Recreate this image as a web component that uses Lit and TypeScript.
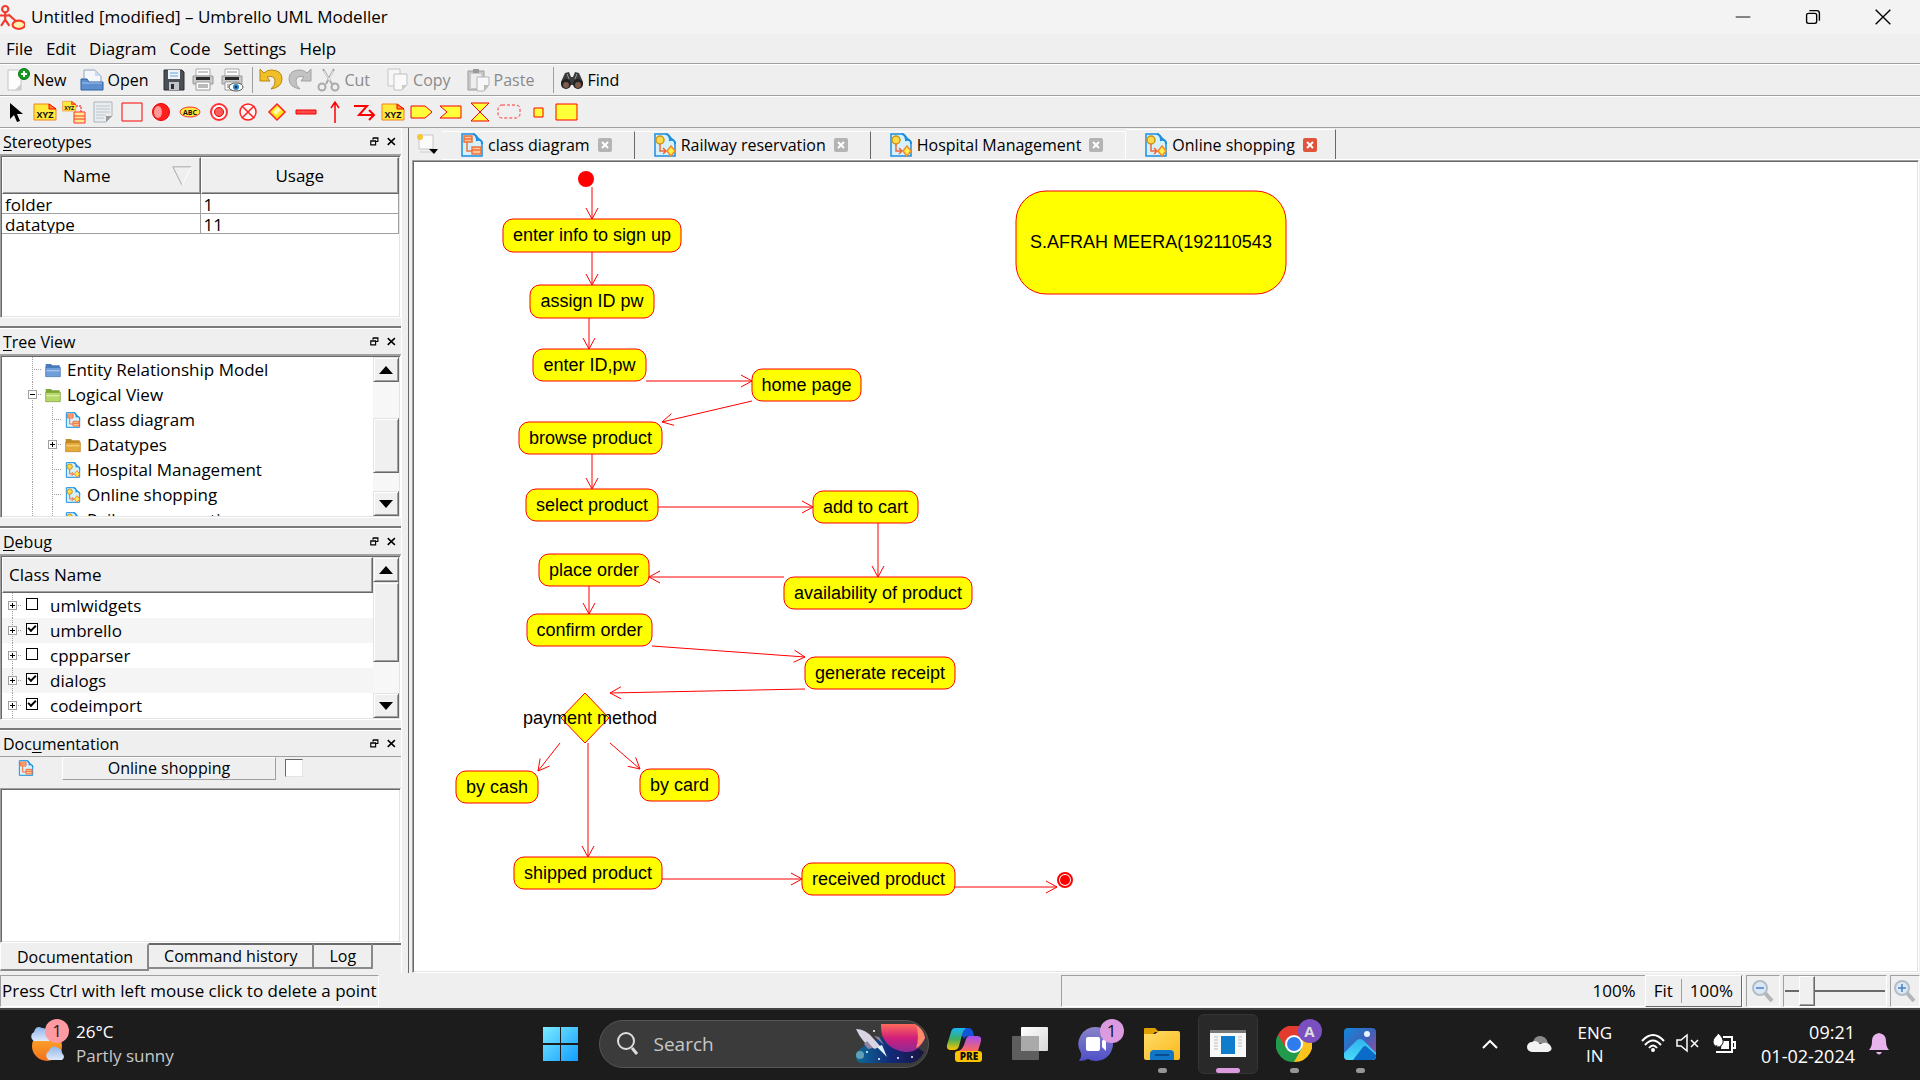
import { LitElement, html, svg, css, nothing } from "lit";
import { customElement, property, state } from "lit/decorators.js";
import { classMap } from "lit/directives/class-map.js";

/* ---------- icon drawings, all on a 24 x 24 grid ---------- */

const page = svg`<path d="M2 1h12l8 8v14H2z" fill="#d5f1fc" stroke="#1d8fe0" stroke-width="1.500"/><path d="M13 1q4 1 4 6 5-1 5 4" fill="#fff" stroke="#1d8fe0" stroke-width="2"/>`;

const xyz = (x: number, y: number, s: number) => svg`
  <g transform="translate(${x} ${y}) scale(${s})">
    <path d="M1 4h15l7 5v11H1z" fill="#ffe93b" stroke="#f58220"/>
    <path d="M16 4l7 5h-7z" fill="#ff8a3a" stroke="#f00"/>
    <text x="12" y="18" text-anchor="middle" font-family="Open Sans, sans-serif" font-weight="700" font-size="9" fill="#111">XYZ</text>
  </g>`;

const printer = svg`
  <path d="M5 1h14v7H5z" fill="#fff" stroke="#aaa"/><path d="M7 3h10v2H7z" fill="#c8c8c8"/>
  <path d="M2 8h20v8H2z" fill="#c9c9c9" stroke="#9a9a9a"/><path d="M5 9h14v3H5z" fill="#2b2b2b"/>
  <path d="M5 14h14v8H5z" fill="#fdfdfd" stroke="#999"/><path d="M7 17h10M7 19h10" stroke="#777"/>`;

const ICONS: Record<string, unknown> = {
  app: svg`<g fill="none" stroke="#f33a2c" stroke-width="2"><circle cx="5" cy="4" r="3"/><path d="M5 7v7M0 10h9M5 14l-4 6M5 14l4 6M8 9l8 7"/><ellipse cx="18" cy="19" rx="6" ry="4" fill="#fff3b0"/></g>`,
  new: svg`<path d="M2 2h13v20H2z" fill="#fdfdfd" stroke="#c4c4c4"/><path d="M15 16l-6 6h6z" fill="#ccc"/><circle cx="18" cy="6" r="5.500" fill="#139a1d" stroke="#0c7a14"/><path d="M18 3v6M15 6h6" stroke="#fff" stroke-width="2"/>`,
  open: svg`<path d="M4 2h11l6 6v10H4z" fill="#f4f8fd" stroke="#8fa3bd"/><path d="M15 2v6h6z" fill="#c9d8ea"/><path d="M1 11h6l2 3h14v8H1z" fill="#5d8fd0" stroke="#2f5f9f"/><path d="M2 15h20" stroke="#a9c6ec"/>`,
  save: svg`<path d="M2 2h18l2 2v18H2z" fill="#4b4f57" stroke="#2b2d31"/><path d="M6 2h12v9H6z" fill="#eef3f8"/><path d="M8 5h8M8 8h8" stroke="#6da4d8"/><path d="M7 14h10v8H7z" fill="#c2c4c8"/><path d="M9 16h3v5H9z" fill="#2b2d31"/>`,
  print: printer,
  preview: svg`${printer}<ellipse cx="16" cy="19" rx="7" ry="4" fill="#fff" stroke="#555"/><circle cx="16" cy="19" r="3" fill="#2a7fc4"/><circle cx="16" cy="19" r="1" fill="#123"/>`,
  undo: svg`<path d="M1 1v12h10L8 9q7-2 8 3 1 5-4 9 11-2 11-10 0-9-11-9-4 0-7 3z" fill="#f1bf2a" stroke="#b8870b"/>`,
  redo: svg`<path d="M23 1v12H13l3-4q-7-2-8 3-1 5 4 9-11-2-11-10 0-9 11-9 4 0 7 3z" fill="#c3c3c3" stroke="#a2a2a2"/>`,
  cut: svg`<g fill="none" stroke="#a9a9a9" stroke-width="2"><path d="M6 1l9 15M17 1L9 16"/><circle cx="5" cy="19" r="3.500"/><circle cx="18" cy="19" r="3.500"/></g><path d="M7 3l6 10M16 3l-4 9" stroke="#eee"/>`,
  copy: svg`<path d="M2 1h12v17H2z" fill="#f6f6f6" stroke="#c6c6c6"/><path d="M8 6h13v11l-5 5H8z" fill="#f9f9f9" stroke="#c2c2c2"/><path d="M21 17l-5 5v-5z" fill="#ccc"/>`,
  paste: svg`<path d="M1 3h16v19H1z" fill="#c9c9c9" stroke="#9c9c9c"/><path d="M4 6h10v14H4z" fill="#eee"/><path d="M6 1h6v4H6z" fill="#999"/><path d="M10 9h12v8l-5 6h-7z" fill="#f7f7f7" stroke="#b5b5b5"/><path d="M22 17l-5 6v-6z" fill="#bbb"/>`,
  find: svg`<path d="M5 5l4-1 2 5h2l2-5 4 1 4 9v3H1v-3z" fill="#3b3b3b"/><circle cx="6" cy="16" r="5" fill="#222"/><circle cx="18" cy="16" r="5" fill="#222"/><circle cx="6" cy="17" r="3" fill="#7d5c4c"/><circle cx="18" cy="17" r="3" fill="#7d5c4c"/><path d="M7 6l2 5M17 6l-2 5" stroke="#999"/>`,
  arrow: svg`<path d="M6 3v16l4-4 3 7 3-1-3-7h6z" fill="#000"/>`,
  xyz: xyz(0, 0, 1),
  dependency: svg`${xyz(0, -1, 0.6)}<path d="M14 6h5v6" fill="none" stroke="#f00" stroke-dasharray="2 1"/><path d="M12 12h11v11H12z" fill="#ffe98a" stroke="#f33"/><path d="M12 16h11M12 19h11" stroke="#f33"/>`,
  note: svg`<path d="M3 2h18v14l-6 6H3z" fill="#e9edf0" stroke="#adb4ba"/><path d="M5 6h14M5 9h14M5 12h14M5 15h10M5 18h8" stroke="#bcc5cc"/><path d="M21 16l-6 6v-6z" fill="#999"/>`,
  box: svg`<path d="M2 3h20v18H2z" fill="none" stroke="#f00"/>`,
  ball: svg`<circle cx="12" cy="12" r="8.500" fill="#ff1f1f" stroke="#e00"/><ellipse cx="9" cy="12" rx="4" ry="6" fill="#ff9a9a"/>`,
  abc: svg`<ellipse cx="12" cy="12" rx="10" ry="5" fill="#ffe93b" stroke="#f33"/><text x="12" y="15" text-anchor="middle" font-family="Open Sans, sans-serif" font-weight="700" font-size="7" fill="#111">ABC</text>`,
  target: svg`<circle cx="12" cy="12" r="8" fill="#fff" stroke="#f33" stroke-width="2"/><circle cx="12" cy="12" r="4.500" fill="#ff5c5c" stroke="#e00"/>`,
  cross: svg`<circle cx="12" cy="12" r="8" fill="#fff5f5" stroke="#f22" stroke-width="1.500"/><path d="M6 6l12 12M18 6L6 18" stroke="#f22" stroke-width="1.500"/>`,
  diamond: svg`<path d="M12 4l8 8-8 8-8-8z" fill="#ffe61a" stroke="#f22" stroke-width="1.500"/><path d="M8 12l5-5 3 3-5 5z" fill="#fff9b8"/>`,
  dash: svg`<path d="M2 10h20v4H2z" fill="#ff4a4a" stroke="#e00"/>`,
  up: svg`<path d="M12 23V2M8 8l4-6 4 6" fill="none" stroke="#f00" stroke-width="1.500"/>`,
  zigzag: svg`<path d="M2 6h13L7 15h15M17 10l5 5-5 5" fill="none" stroke="#f00" stroke-width="2"/>`,
  signal: svg`<path d="M1 6h14l7 6-7 6H1z" fill="#ffff3a" stroke="#f00"/>`,
  receive: svg`<path d="M1 6h21v12H1l7-6z" fill="#ffff3a" stroke="#f00"/>`,
  hourglass: svg`<path d="M3 3h18L3 21h18z" fill="#ffff3a" stroke="#f00"/>`,
  region: svg`<rect x="1" y="5" width="22" height="13" rx="4" fill="none" stroke="#f33" stroke-dasharray="3 2"/>`,
  pin: svg`<path d="M8 8h9v9H8z" fill="#ffff3a" stroke="#f00"/>`,
  object: svg`<path d="M1 4h21v16H1z" fill="#ffff3a" stroke="#f00"/>`,
  newtab: svg`<path d="M4 3h14v14H4z" fill="#fbfbfb" stroke="#c6c6c6"/><circle cx="5" cy="5" r="3" fill="#f6c736"/><path d="M5 20h12" stroke="#d0d0d0"/><path d="M14 17h9l-4 5z" fill="#000"/>`,
  classdiag: svg`${page}<path d="M4 3h8v6H4zM12 14h9v7h-9z" fill="#ffc49a" stroke="#f0703c" stroke-width="1.500"/><path d="M7 9v9h5M4 6h8M12 17h9" fill="none" stroke="#f0703c" stroke-width="1.500"/>`,
  activity: svg`${page}<circle cx="7" cy="7" r="4" fill="#ffd94a" stroke="#c9951a" stroke-width="1.500"/><path d="M7 11v7h5M10 15l3 3-3 3" fill="none" stroke="#f0653a" stroke-width="1.500"/><path d="M18 13l4 5-4 5-4-5z" fill="#fff04a" stroke="#f58a28" stroke-width="1.500"/>`,
  folderBlue: svg`<path d="M1 3h8l2 2h11v4H1z" fill="#4a7bbd"/><path d="M1 8h22v14H1z" fill="#6f9fdb" stroke="#3c6aa8"/><path d="M2 13h20" stroke="#a4c4ee" stroke-width="2"/>`,
  folderGreen: svg`<path d="M1 3h8l2 2h11v4H1z" fill="#7fa83a"/><path d="M1 8h22v14H1z" fill="#b6d96a" stroke="#6e9a2c"/><path d="M2 13h20" stroke="#d9f0a4" stroke-width="2"/>`,
  folderGold: svg`<path d="M1 3h8l2 2h11v4H1z" fill="#c08a28"/><path d="M1 8h22v14H1z" fill="#e5aa3a" stroke="#b07a18"/><path d="M2 13h20" stroke="#f5cf7e" stroke-width="2"/>`,
  zoomOut: svg`<path d="M14 14l7 8" stroke="#b5b5b5" stroke-width="4"/><circle cx="9" cy="9" r="7" fill="#d8e8f8" stroke="#b4bcc6" stroke-width="2"/><path d="M5 9h8" stroke="#4d7fc0" stroke-width="1.500"/>`,
  zoomIn: svg`<path d="M14 14l7 8" stroke="#b5b5b5" stroke-width="4"/><circle cx="9" cy="9" r="7" fill="#d8e8f8" stroke="#b4bcc6" stroke-width="2"/><path d="M5 9h8M9 5v8" stroke="#4d7fc0" stroke-width="1.500"/>`,
  float: svg`<path d="M8 2h13v10h-5M8 2v5M8 3h13" fill="none" stroke="#000" stroke-width="3"/><path d="M2 10h13v11H2zM2 11h13" fill="none" stroke="#000" stroke-width="3"/>`,
  close: svg`<path d="M2 3l19 18M21 3L2 21" stroke="#000" stroke-width="4"/>`,
  minimize: svg`<path d="M4 12h16" stroke="#000"/>`,
  restore: svg`<rect x="5" y="8" width="11" height="11" rx="2" fill="none" stroke="#000" stroke-width="1.500"/><path d="M8 5h8q3 0 3 3v8" fill="none" stroke="#000" stroke-width="1.500"/>`,
  quit: svg`<path d="M4 4l16 16M20 4L4 20" stroke="#000" stroke-width="1.500"/>`,
  tabclose: svg`<path d="M6 6l12 12M18 6L6 18" stroke="#fff" stroke-width="4"/>`,
  sort: svg`<path d="M2 2h20" stroke="#a0a0a0"/><path d="M2 2l10 20" stroke="#a0a0a0"/><path d="M22 2L12 22" stroke="#fff"/>`,
};

const icon = (name: string, size = 24) =>
  svg`<svg class="icon" width=${size} height=${size} viewBox="0 0 24 24" aria-hidden="true">${ICONS[name]}</svg>`;

/* ---------- dock panel ---------- */

@customElement("dock-panel")
export class DockPanel extends LitElement {
  @property() before = "";
  @property() key = "";
  @property() after = "";

  static styles = css`
    :host { display: flex; flex-direction: column; min-height: 0; border-top: 2px solid #7a7a7a; }
    :host([first]) { border-top: 0; }
    .title { display: flex; align-items: center; height: 25px; flex: none; padding: 0 1px 0 3px; border-top: 1px solid #fff; border-bottom: 1px solid #a0a0a0; }
    h2 { flex: 1; margin: 0; font-size: 16px; font-weight: 400; line-height: 24px; }
    button { display: grid; place-items: center; width: 17px; height: 17px; padding: 0; border: 0; background: none; }
    u { text-underline-offset: 2px; }
  `;

  render() {
    return html`
      <div class="title">
        <h2>${this.before}<u>${this.key}</u>${this.after}</h2>
        <button aria-label="Float panel">${icon("float", 9)}</button>
        <button aria-label="Close panel">${icon("close", 9)}</button>
      </div>
      <slot></slot>
    `;
  }
}

/* ---------- classic scroll bar ---------- */

@customElement("scroll-strip")
export class ScrollStrip extends LitElement {
  @property({ type: Number }) lead = 0;
  @property({ type: Number }) thumb = 1;
  @property({ type: Number }) trail = 0;

  static styles = css`
    :host { display: flex; flex-direction: column; width: 26px; flex: none; background: #f7f7f7; }
    button, .thumb { box-sizing: border-box; background: #f0f0f0; border: 1px solid; border-color: #e3e3e3 #696969 #696969 #e3e3e3; box-shadow: inset 1px 1px #fff, inset -1px -1px #a0a0a0; }
    button { display: grid; place-items: center; height: 25px; width: 26px; flex: none; padding: 0; }
  `;

  render() {
    return html`
      <button aria-label="Scroll up"><svg width="14" height="8" viewBox="0 0 14 8"><path d="M7 0l7 8H0z" /></svg></button>
      <div style="flex:${this.lead}"></div>
      <div class="thumb" style="flex:${this.thumb}"></div>
      <div style="flex:${this.trail}"></div>
      <button aria-label="Scroll down"><svg width="14" height="8" viewBox="0 0 14 8"><path d="M0 0h14L7 8z" /></svg></button>
    `;
  }
}

/* ---------- activity diagram ---------- */

type Box = [x: number, y: number, w: number, h: number, label: string];
type Edge = [x1: number, y1: number, x2: number, y2: number];

const BOXES: Box[] = [
  [89, 57, 178, 33, "enter info to sign up"],
  [116, 123, 124, 33, "assign ID pw"],
  [119, 187, 113, 32, "enter ID,pw"],
  [338, 207, 109, 32, "home page"],
  [105, 260, 143, 32, "browse product"],
  [112, 327, 132, 32, "select product"],
  [399, 329, 105, 32, "add to cart"],
  [370, 415, 188, 32, "availability of product"],
  [125, 392, 110, 32, "place order"],
  [113, 452, 125, 32, "confirm order"],
  [391, 495, 150, 32, "generate receipt"],
  [42, 609, 82, 32, "by cash"],
  [226, 607, 79, 32, "by card"],
  [100, 695, 148, 32, "shipped product"],
  [388, 701, 153, 32, "received product"],
  [602, 29, 270, 103, "S.AFRAH MEERA(192110543"],
];

const EDGES: Edge[] = [
  [178, 25, 178, 57], [178, 90, 178, 123], [175, 156, 175, 187], [232, 219, 338, 219],
  [338, 239, 248, 260], [178, 292, 178, 327], [244, 345, 399, 345], [464, 361, 464, 415],
  [370, 415, 235, 415], [175, 424, 175, 452], [238, 484, 391, 495], [391, 527, 196, 531],
  [146, 581, 124, 609], [174, 581, 174, 695], [196, 581, 226, 607], [248, 717, 388, 717],
  [541, 725, 643, 725],
];

@customElement("activity-canvas")
export class ActivityCanvas extends LitElement {
  static styles = css`
    :host { display: block; flex: 1; min-height: 0; overflow: hidden; background: #fff; }
    svg { display: block; width: 100%; height: 100%; }
    rect, .decision { fill: #ff0; stroke: #f00; }
    .edge { fill: none; stroke: #f00; }
    .solid { fill: #f00; }
    .ring { fill: #fff; stroke: #f00; stroke-width: 2; }
    text { font: 18px "Liberation Sans", Arial, sans-serif; text-anchor: middle; fill: #000; }
  `;

  private edge([x1, y1, x2, y2]: Edge) {
    const a = Math.atan2(y2 - y1, x2 - x1);
    const wing = (side: number) => {
      const x = x2 - 11 * Math.cos(a) - side * 6 * Math.sin(a);
      const y = y2 - 11 * Math.sin(a) + side * 6 * Math.cos(a);
      return `${x.toFixed(1)} ${y.toFixed(1)}`;
    };
    return svg`<path class="edge" d="M${x1} ${y1}L${x2} ${y2}M${wing(1)}L${x2} ${y2}L${wing(-1)}"/>`;
  }

  render() {
    return html`<svg role="img" aria-label="Online shopping activity diagram">
      <circle class="solid" cx="172" cy="17" r="8" />
      ${BOXES.map(([x, y, w, h, label]) => svg`
        <rect x=${x} y=${y} width=${w} height=${h} rx=${h > 40 ? 30 : 10}/>
        <text x=${x + w / 2} y=${y + Math.floor(h / 2) + 6}>${label}</text>`)}
      ${EDGES.map((e) => this.edge(e))}
      <path class="decision" d="M171 531l24 25-24 25-24-25z" />
      <text x="176" y="562">payment method</text>
      <circle class="ring" cx="651" cy="718" r="7" />
      <circle class="solid" cx="651" cy="718" r="5" />
    </svg>`;
  }
}

/* ---------- desktop taskbar ---------- */

const TASKS: { name: string; running?: boolean; active?: boolean; badge?: string; badgeClass?: string; art: unknown }[] = [
  {
    name: "Copilot",
    art: svg`<defs><linearGradient id="ca" x2="0" y2="1"><stop stop-color="#16b5f5"/><stop offset=".5" stop-color="#3fae62"/><stop offset="1" stop-color="#ffc400"/></linearGradient><linearGradient id="cb" x2="0" y2="1"><stop stop-color="#a34df0"/><stop offset="1" stop-color="#ff6a5a"/></linearGradient></defs>
      <path d="M12 2h10q4 0 5 4l1 4h-5q-4 0-5 3z" fill="#1455d8"/>
      <path d="M9 2h11q-3 2-4 7l-3 11q-1 4-5 4H5q-5 0-4-5L5 6q1-4 4-4z" fill="url(#ca)"/>
      <path d="M23 10h8q5 0 4 5l-3 10H12q4-1 6-6l2-6q1-3 3-3z" fill="url(#cb)"/>
      <rect x="9" y="25" width="27" height="11" rx="3" fill="#ffc400"/>
      <text x="23" y="34" text-anchor="middle" font-family="Open Sans, sans-serif" font-weight="800" font-size="10" fill="#111">PRE</text>`,
  },
  {
    name: "Task view",
    art: svg`<defs><linearGradient id="tv" x2="1" y2="1"><stop stop-color="#fff"/><stop offset="1" stop-color="#d8d8d8"/></linearGradient></defs><rect x="9" y="1" width="27" height="24" rx="1" fill="url(#tv)"/><rect x="0" y="10" width="27" height="24" rx="1" fill="#6a6a6a" opacity=".85"/><path d="M9 10h18v15H9z" fill="#aaa"/>`,
  },
  {
    name: "Chat", badge: "1", badgeClass: "pink",
    art: svg`<defs><linearGradient id="ch" x2="0" y2="1"><stop stop-color="#8a84c8"/><stop offset="1" stop-color="#4f50c8"/></linearGradient></defs><path d="M18 1a17 17 0 1 1-8 32q-4 2-9 2 3-5 2-8A17 17 0 0 1 18 1z" fill="url(#ch)"/><rect x="8" y="11" width="14" height="14" rx="2" fill="#fff"/><path d="M24 15l4-4v14l-4-4z" fill="#fff"/>`,
  },
  {
    name: "File Explorer", running: true,
    art: svg`<defs><linearGradient id="fe" x2="1" y2="1"><stop stop-color="#ffdc6a"/><stop offset="1" stop-color="#fbb91a"/></linearGradient></defs><path d="M0 3q0-1 1-1h10l4 4h-4l-3 3H0z" fill="#e0a000"/><path d="M0 8h11l4-3h19q2 0 2 2v25q0 2-2 2H2q-2 0-2-2z" fill="url(#fe)"/><path d="M6 34v-6q0-4 4-4h16q4 0 4 4v6z" fill="#0f76c8"/><path d="M11 29h14" stroke="#0a4d8c" stroke-width="2"/>`,
  },
  {
    name: "Umbrello", running: true, active: true,
    art: svg`<path d="M0 4h36v27H0z" fill="#f8f8f8"/><path d="M0 4h36v3H0z" fill="#777"/><path d="M11 10h14v18H11z" fill="#0f7ccc"/><path d="M4 11h4M4 14h4M4 17h4M4 20h4M4 23h4M28 11h4M28 14h4M28 17h4M28 20h4" stroke="#bbb"/>`,
  },
  {
    name: "Chrome", running: true, badge: "A", badgeClass: "violet",
    art: svg`<path d="M18 18L2 9a18 18 0 0 1 32 0z" fill="#e33b2e"/><path d="M18 18l16-9a18 18 0 0 1-16 27z" fill="#fcc31e"/><path d="M18 18v18A18 18 0 0 1 2 9z" fill="#229a4b"/><path d="M10 22L2 9h16z" fill="#e33b2e"/><path d="M26 22l-8 14-6-10z" fill="#229a4b"/><circle cx="18" cy="18" r="9" fill="#fff"/><circle cx="18" cy="18" r="7" fill="#2f7cf0"/>`,
  },
  {
    name: "Photos", running: true,
    art: svg`<defs><linearGradient id="ph" x2="1" y2="1"><stop stop-color="#1288dc"/><stop offset=".5" stop-color="#3e62b8"/><stop offset="1" stop-color="#a8489a"/></linearGradient><linearGradient id="pm" x2="0" y2="1"><stop stop-color="#2fb4ee"/><stop offset="1" stop-color="#4ad8fa"/></linearGradient></defs><rect x="2" y="2" width="32" height="32" rx="4" fill="url(#ph)"/><path d="M2 27l13-13q3-2 6 0l13 13v3q0 4-4 4H6q-4 0-4-4z" fill="url(#pm)"/><path d="M11 34l10-13q2-2 4 0l9 8v1q0 4-4 4z" fill="#0a6cc8"/><circle cx="25" cy="8" r="3" fill="#e8f4ff"/>`,
  },
];

@customElement("task-bar")
export class TaskBar extends LitElement {
  static styles = css`
    :host { display: grid; grid-template-columns: 1fr auto 1fr; align-items: center; height: 72px; box-sizing: border-box; padding-bottom: 2px; background: #1c1c1c; border-top: 2px solid #444; color: #fff; font: 17px/24px "Open Sans", "Noto Sans", sans-serif; }
    button { padding: 0; border: 0; background: none; color: inherit; font: inherit; }
    .weather { display: flex; gap: 7px; justify-self: start; align-items: center; padding-left: 29px; text-align: left; }
    .weather small, .clock small { display: block; font-size: inherit; }
    .weather small { color: #c8c8c8; }
    .weather svg { margin-bottom: 8px; }
    .middle { display: flex; align-items: center; }
    .task { position: relative; display: grid; place-items: center; width: 66px; height: 60px; }
    .task.active::before { content: ""; position: absolute; inset: 0 3px; border-radius: 6px; background: #292929; border: 1px solid #353535; }
    .task svg { position: relative; display: block; }
    .task.running::after { content: ""; position: absolute; bottom: 1px; left: 29px; width: 9px; height: 5px; border-radius: 3px; background: #969696; }
    .task.active::after { left: 21px; width: 24px; background: #dc9be0; }
    .badge { position: absolute; top: 5px; right: 5px; width: 24px; height: 24px; border-radius: 12px; text-align: center; line-height: 24px; }
    .pink { background: #dc9be0; color: #111; }
    .violet { background: #7a4fc0; color: #ddd; font-size: 15px; font-weight: 700; }
    .search { display: flex; align-items: center; gap: 14px; box-sizing: border-box; width: 330px; height: 48px; margin: 0 2px 0 5px; padding-left: 16px; border: 1px solid #555; border-radius: 24px; background: #3b3b3b; overflow: hidden; }
    .search input { flex: 1; min-width: 0; padding: 0; border: 0; outline: 0; background: none; color: #fff; font: 19px "Open Sans", sans-serif; }
    .search input::placeholder { color: #c8c8c8; opacity: 1; }
    .tray { display: flex; align-items: center; justify-self: end; padding-right: 30px; }
    .tray svg { display: block; }
    .cloud { margin-left: 28px; }
    .lang { margin: 0 29px 0 25px; text-align: center; line-height: 23px; }
    .status { display: flex; gap: 11px; }
    .clock { margin: 0 13px 0 24px; text-align: right; font-size: 18px; }
  `;

  render() {
    return html`
      <button class="weather">
        <svg width="40" height="44" viewBox="0 0 40 44">
          <defs><linearGradient id="sun" x2="0" y2="1"><stop stop-color="#ffb52e" /><stop offset="1" stop-color="#f2701c" /></linearGradient>
          <linearGradient id="cl" x2="0" y2="1"><stop stop-color="#8fb4ea" /><stop offset="1" stop-color="#dfe9fa" /></linearGradient></defs>
          <circle cx="18" cy="28" r="15" fill="url(#sun)" />
          <path d="M5 23a5 5 0 0 1 0-9q2-7 8-4 5 0 6 5 4 3 1 8z" fill="url(#cl)" />
          <path d="M20 42a5 5 0 0 1 0-9q3-7 9-3 4 1 4 5 4 4 0 7z" fill="url(#cl)" />
          <circle cx="28" cy="13" r="12" fill="#ff9aa2" />
          <text x="28" y="19" text-anchor="middle" font-family="Open Sans, sans-serif" font-size="17" fill="#222">1</text>
        </svg>
        <span>26°C<small>Partly sunny</small></span>
      </button>
      <div class="middle">
        <button class="task" aria-label="Start">
          <svg width="36" height="36" viewBox="0 0 36 36"><defs><linearGradient id="w" gradientUnits="userSpaceOnUse" x1="0" y1="0" x2="36" y2="36"><stop stop-color="#7cecff" /><stop offset="1" stop-color="#0f9bff" /></linearGradient></defs><path d="M0 1h17v16H0zM18 1h17v16H18zM0 19h17v16H0zM18 19h17v16H18z" fill="url(#w)" /></svg>
        </button>
        <div class="search">
          <svg width="24" height="26" viewBox="0 0 24 26"><circle cx="10" cy="10" r="8" fill="none" stroke="#ddd" stroke-width="2" /><path d="M16 17l5 6" stroke="#ddd" stroke-width="3" /></svg>
          <input aria-label="Search" placeholder="Search" />
          <svg width="74" height="40" viewBox="0 0 74 40">
            <defs><linearGradient id="sky" x2="1"><stop stop-color="#0d6c98" /><stop offset=".5" stop-color="#122a7a" /><stop offset="1" stop-color="#1a1440" /></linearGradient>
            <linearGradient id="pl" x2="0" y2="1"><stop stop-color="#ff6a5a" /><stop offset=".5" stop-color="#d01f7a" /><stop offset="1" stop-color="#8a2a9a" /></linearGradient></defs>
            <path d="M2 32q0-6 12-12L40 8l30 20q-6 11-14 11H8q-6 0-6-7z" fill="url(#sky)" />
            <path d="M27 0h34q8 4 10 14-6 15-20 14Q26 24 27 0z" fill="url(#pl)" /><path d="M62 1q8 5 9 13-4 8-9 10 4-10 0-23z" fill="#ff8a6a" />
            <path d="M2 5q9 0 16 8l8 9-5 3Q9 21 2 5z" fill="#d9d3e2" /><path d="M10 20l3-3 6 7-5 1zM20 12l5 1 5 8z" fill="#8b86a2" /><path d="M23 23l5-2 5 12z" fill="#dff4ff" />
            <circle cx="6" cy="31" r="4" fill="#5f9fb8" /><g fill="#fff"><circle cx="25" cy="35" r="1" /><circle cx="44" cy="34" r="1" /><circle cx="58" cy="33" r="1" /><circle cx="13" cy="28" r="1" /><circle cx="20" cy="7" r="1" /></g>
          </svg>
        </div>
        ${TASKS.map((t) => html`
          <button class=${classMap({ task: true, running: !!t.running, active: !!t.active })} aria-label=${t.name}>
            <svg width="36" height="36" viewBox="0 0 36 36">${t.art}</svg>
            ${t.badge ? html`<span class="badge ${t.badgeClass}">${t.badge}</span>` : nothing}
          </button>`)}
      </div>
      <div class="tray">
        <button aria-label="Hidden icons"><svg width="18" height="12" viewBox="0 0 18 12"><path d="M2 10l7-7 7 7" fill="none" stroke="#fff" stroke-width="2" /></svg></button>
        <svg class="cloud" width="25" height="18" viewBox="0 0 25 18"><path d="M6 8q1-7 7-7t8 7z" fill="#8a8a8a" /><path d="M5 17a5 5 0 0 1 0-10q4-3 8 2 7-3 10 1 4 5-2 7z" fill="#f2f2f2" /></svg>
        <button class="lang">ENG<br />IN</button>
        <div class="status">
          <svg width="24" height="20" viewBox="0 0 24 20"><g fill="none" stroke="#fff" stroke-width="2"><path d="M1 8q11-12 22 0M4 12q8-9 16 0M8 15q4-5 8 0" /></g><circle cx="12" cy="17" r="2" fill="#fff" /></svg>
          <svg width="24" height="20" viewBox="0 0 24 20"><path d="M1 7h4l6-5v16l-6-5H1zM15 7l7 7M22 7l-7 7" fill="none" stroke="#fff" stroke-width="1.500" /></svg>
          <svg width="26" height="22" viewBox="0 0 26 22"><path d="M12 4h9v15H5M22 9h2v6h-2" fill="none" stroke="#fff" stroke-width="2" /><path d="M11 8h7v8h-8z" fill="#fff" /><path d="M7 0q6 5 5 10-3 6-8 3-4-4 0-9 2-1 3-4zM6 12l-3 7" fill="#fff" stroke="#1c1c1c" /></svg>
        </div>
        <button class="clock">09:21<small>01-02-2024</small></button>
        <button aria-label="Notifications"><svg width="22" height="24" viewBox="0 0 22 24"><path d="M1 18q3-3 3-9 0-7 7-8 7 1 7 8 0 6 3 9z" fill="#e9b3ee" /><path d="M8 20h6q-3 5-6 0z" fill="#e9b3ee" /></svg></button>
      </div>
    `;
  }
}

/* ---------- main window ---------- */

interface TreeItem { label: string; icon: string; level: 1 | 2; box?: "plus" | "minus" }

const TREE: TreeItem[] = [
  { label: "Entity Relationship Model", icon: "folderBlue", level: 1 },
  { label: "Logical View", icon: "folderGreen", level: 1, box: "minus" },
  { label: "class diagram", icon: "classdiag", level: 2 },
  { label: "Datatypes", icon: "folderGold", level: 2, box: "plus" },
  { label: "Hospital Management", icon: "activity", level: 2 },
  { label: "Online shopping", icon: "activity", level: 2 },
  { label: "Railway reservation", icon: "activity", level: 2 },
];

const TOOLS = ["arrow", "xyz", "dependency", "note", "box", "ball", "abc", "target", "cross", "diamond", "dash", "up", "zigzag", "xyz", "signal", "receive", "hourglass", "region", "pin", "object"];

const expander = (x: number, kind: string) => svg`
  <rect x=${x - 4} y="8" width="8" height="8" fill="#fff" stroke="#a0a0a0"/>
  <path d="M${x - 2} 12h5${kind === "plus" ? `M${x} 10v5` : ""}" stroke="#000"/>`;

@customElement("app-root")
export class AppRoot extends LitElement {
  @state() private tab = 3;
  private tabs = ["class diagram", "Railway reservation", "Hospital Management", "Online shopping"];
  private modules: [string, boolean][] = [["umlwidgets", false], ["umbrello", true], ["cppparser", false], ["dialogs", true], ["codeimport", true]];

  static styles = css`
    :host { display: flex; flex-direction: column; height: 100vh; overflow: hidden; background: #efefef; color: #000; font: 16px/24px "Open Sans", "Noto Sans", sans-serif; }
    button { padding: 0; border: 0; background: none; color: inherit; font: inherit; }
    .icon { display: block; flex: none; }

    .titlebar { display: flex; align-items: center; gap: 6px; height: 34px; flex: none; background: #f3f3f3; font-size: 17px; }
    h1 { flex: 1; margin: 0; font-size: 17px; font-weight: 400; }
    .winbtn { display: grid; place-items: center; width: 64px; height: 34px; }
    .winbtns { display: flex; gap: 6px; padding-right: 5px; }
    .menubar { display: flex; gap: 13px; height: 29px; flex: none; padding-left: 6px; align-items: center; font-size: 17px; border-bottom: 1px solid #a0a0a0; }
    .toolbar { display: flex; align-items: center; height: 30px; flex: none; border-top: 1px solid #fff; border-bottom: 1px solid #a0a0a0; }
    .main-tools { padding-left: 6px; gap: 5px; }
    .main-tools button { display: flex; align-items: center; gap: 3px; }
    .main-tools .wide { margin-right: 9px; }
    .main-tools .wide:disabled { margin-right: 11px; }
    .main-tools button:disabled { color: #8a8a8a; }
    .sep { width: 1px; height: 26px; margin: 0 1px 0 3px; background: #a0a0a0; }
    .shape-tools { padding-left: 1px; }
    .shape-tools button { display: grid; place-items: center; width: 29px; }

    .work { display: flex; flex: 1; min-height: 0; }
    .docks { display: grid; grid-template-rows: minmax(0, 198fr) minmax(0, 200fr) minmax(0, 202fr) minmax(0, 245fr); width: 401px; flex: none; border-right: 1px solid #fff; font-size: 17px; }
    .sunken { display: flex; flex: 1; min-height: 0; box-sizing: border-box; margin: 0 0 8px; padding: 1px; border: 1px solid; border-color: #a0a0a0 #fff #fff #a0a0a0; box-shadow: inset 1px 1px #696969, inset -1px -1px #e3e3e3; background-color: #fff; overflow: hidden; }
    .scroll { flex: 1; min-width: 0; overflow: hidden; }

    table { width: 100%; height: max-content; border-collapse: separate; border-spacing: 0; table-layout: fixed; font-size: 17px; }
    th { height: 35px; padding: 0; font-weight: 400; background: #efefef; border: 1px solid; border-color: #fff #696969 #696969 #fff; box-shadow: inset -1px -1px #a0a0a0; }
    th .head { display: grid; grid-template-columns: 1fr 20px; align-items: center; padding-right: 9px; }
    td { height: 19px; padding: 0 0 0 3px; border-right: 1px solid #a0a0a0; border-bottom: 1px solid #a0a0a0; }
    td div { height: 19px; line-height: 21px; overflow: hidden; }

    ul { margin: 0; padding: 0; list-style: none; }
    li { display: flex; align-items: center; height: 25px; }
    li > span { margin-left: 6px; }
    .guide { display: block; flex: none; }
    .guide line { stroke: #a0a0a0; stroke-dasharray: 1 1; }
    .debug { display: flex; flex-direction: column; }
    .debug .header { flex: none; box-sizing: border-box; height: 36px; padding-left: 6px; line-height: 34px; background: #efefef; border: 1px solid; border-color: #fff #696969 #696969 #fff; box-shadow: inset -1px -1px #a0a0a0; }
    .debug li:nth-child(even) { background: #f5f5f5; }
    .debug label { display: flex; align-items: center; gap: 12px; line-height: 25px; }
    .debug input { appearance: none; display: grid; place-items: center; box-sizing: border-box; width: 12px; height: 12px; margin: 0 0 4px 2px; border: 1px solid #000; background: #fff; }
    .debug input:checked::after { content: ""; width: 6px; height: 3px; margin-bottom: 3px; border: solid #000; border-width: 0 0 2px 2px; transform: rotate(-45deg); }

    .docbar { display: flex; align-items: flex-start; height: 31px; flex: none; }
    .docbar .icon { margin: 3px 28px 0 18px; }
    .docbar button { box-sizing: border-box; width: 214px; height: 23px; line-height: 21px; border: 1px solid; border-color: #fff #a0a0a0 #a0a0a0 #fff; font-size: 16px; }
    .docbar input { appearance: none; width: 18px; height: 18px; box-sizing: border-box; margin: 2px 0 0 9px; border: 1px solid; border-color: #696969 #e3e3e3 #e3e3e3 #696969; background: #fff; }
    .docbox { margin-bottom: 0; padding: 0; }
    textarea { flex: 1; margin: 1px; padding: 2px; border: 0; outline: 0; resize: none; background: #fff; font: inherit; }
    .docktabs { display: flex; align-items: flex-start; height: 30px; flex: none; font-size: 16px; }
    .docktabs button { box-sizing: border-box; height: 26px; padding: 0 15px; line-height: 23px; border: solid #696969; border-width: 2px 2px 2px 0; border-right-color: #8a8a8a; border-bottom-color: #8a8a8a; }
    .docktabs button[aria-selected="true"] { height: 28px; padding: 0 14px 0 16px; border-top-color: transparent; border-left: 1px solid #fff; }
    .docktabs .rest { flex: 1; border-top: 2px solid #696969; }

    .editor { display: flex; flex-direction: column; flex: 1; min-width: 0; margin-left: 6px; padding-left: 3px; border-left: 1px solid #696969; }
    .tabbar { display: flex; align-items: flex-end; height: 32px; flex: none; }
    .newtab { align-self: center; padding: 0 3px; }
    .tabs { display: flex; align-items: flex-end; flex: 1; border-bottom: 1px solid #fff; }
    .tab { display: flex; align-items: center; gap: 4px; box-sizing: border-box; height: 28px; padding: 0 22px 2px 18px; border-right: 1px solid #696969; border-top: 1px solid #fff; }
    .tab.before { border-right-color: #fff; }
    .tab.current { height: 30px; padding: 0 18px 0 18px; }
    .tab .shut { display: grid; place-items: center; width: 14px; height: 14px; margin-left: 4px; border-radius: 2px; background: #b4b4b4; }
    .tab.current .shut { background: #e0553a; }
    .canvas { margin: 0 1px 0 0; }

    .statusbar { display: flex; align-items: center; justify-content: space-between; height: 35px; flex: none; font-size: 17px; }
    .cell { display: flex; align-items: center; box-sizing: border-box; height: 32px; border: 1px solid; border-color: #a0a0a0 #fff #fff #a0a0a0; }
    .message { padding: 0 1px; }
    .right { display: flex; gap: 3px; width: 859px; }
    .zoom { flex: 1; justify-content: flex-end; gap: 9px; }
    .zoomset { display: flex; align-items: center; height: 30px; border: 1px solid; border-color: #fff #696969 #696969 #fff; }
    .zoomset button { padding: 0 8px; }
    .zoomset button + button { border-left: 1px solid #a0a0a0; }
    .slider { width: 104px; }
    input[type="range"] { appearance: none; width: 100%; height: 30px; margin: 0; background: linear-gradient(#696969, #696969) center / 98% 2px no-repeat; }
    input[type="range"]::-webkit-slider-thumb { appearance: none; box-sizing: border-box; width: 16px; height: 30px; background: #f0f0f0; border: 1px solid; border-color: #fff #696969 #696969 #fff; box-shadow: inset -1px -1px #a0a0a0; }
    .mag { padding: 0 4px; }
    .mag:last-child { padding: 0 2px; }
  `;

  private treeRow(item: TreeItem) {
    const w = item.level * 20 + 23;
    const x = item.level * 20 + 10;
    return html`<li>
      <svg class="guide" width=${w} height="25" viewBox="0 0 ${w} 25" shape-rendering="crispEdges">
        <line x1="30" y1="0" x2="30" y2="25" />
        ${item.level === 2 ? svg`<line x1="50" y1="0" x2="50" y2="25"/>` : nothing}
        <line x1=${x} y1="12" x2=${x + 10} y2="12" />
        ${item.box ? expander(x, item.box) : nothing}
      </svg>
      ${icon(item.icon, 16)}<span>${item.label}</span>
    </li>`;
  }

  private action(name: string, label = "", disabled = false) {
    return html`<button class=${label ? "wide" : ""} ?disabled=${disabled} aria-label=${label || name}>${icon(name, 24)}${label}</button>`;
  }

  render() {
    return html`
      <header class="titlebar">
        ${icon("app", 25)}
        <h1>Untitled [modified] – Umbrello UML Modeller</h1>
        <div class="winbtns">
          <button class="winbtn" aria-label="Minimize">${icon("minimize", 22)}</button>
          <button class="winbtn" aria-label="Restore">${icon("restore", 22)}</button>
          <button class="winbtn" aria-label="Close">${icon("quit", 22)}</button>
        </div>
      </header>
      <nav class="menubar">
        ${["File", "Edit", "Diagram", "Code", "Settings", "Help"].map((m) => html`<button>${m}</button>`)}
      </nav>
      <div class="toolbar main-tools">
        ${this.action("new", "New")}${this.action("open", "Open")}${this.action("save")}${this.action("print")}${this.action("preview")}
        <span class="sep"></span>
        ${this.action("undo")}${this.action("redo", "", true)}${this.action("cut", "Cut", true)}${this.action("copy", "Copy", true)}${this.action("paste", "Paste", true)}
        <span class="sep"></span>
        ${this.action("find", "Find")}
      </div>
      <div class="toolbar shape-tools">
        ${TOOLS.map((t) => html`<button aria-label=${t}>${icon(t, 24)}</button>`)}
      </div>

      <div class="work">
        <aside class="docks">
          <dock-panel first key="S" after="tereotypes">
            <div class="sunken">
              <table>
                <thead><tr><th><div class="head"><span>Name</span>${icon("sort", 22)}</div></th><th>Usage</th></tr></thead>
                <tbody>
                  <tr><td><div>folder</div></td><td><div>1</div></td></tr>
                  <tr><td><div>datatype</div></td><td><div>11</div></td></tr>
                </tbody>
              </table>
            </div>
          </dock-panel>

          <dock-panel key="T" after="ree View">
            <div class="sunken">
              <ul class="scroll">${TREE.map((i) => this.treeRow(i))}</ul>
              <scroll-strip .lead=${36} .thumb=${54} .trail=${18}></scroll-strip>
            </div>
          </dock-panel>

          <dock-panel key="D" after="ebug">
            <div class="sunken">
              <div class="scroll debug">
                <div class="header">Class Name</div>
                <ul>
                  ${this.modules.map(([name, on]) => html`<li>
                    <svg class="guide" width="22" height="25" viewBox="0 0 22 25" shape-rendering="crispEdges">
                      <line x1="10" y1="0" x2="10" y2="25" /><line x1="10" y1="12" x2="20" y2="12" />${expander(10, "plus")}
                    </svg>
                    <label><input type="checkbox" .checked=${on} />${name}</label>
                  </li>`)}
                </ul>
              </div>
              <scroll-strip .lead=${0} .thumb=${79} .trail=${32}></scroll-strip>
            </div>
          </dock-panel>

          <dock-panel before="Doc" key="u" after="mentation">
            <div class="docbar">
              ${icon("classdiag", 16)}
              <button>Online shopping</button>
              <input type="checkbox" aria-label="Lock documentation" />
            </div>
            <div class="sunken docbox"><textarea aria-label="Documentation text"></textarea></div>
            <div class="docktabs" role="tablist">
              <button role="tab" aria-selected="true">Documentation</button>
              <button role="tab" aria-selected="false">Command history</button>
              <button role="tab" aria-selected="false">Log</button>
              <span class="rest"></span>
            </div>
          </dock-panel>
        </aside>

        <main class="editor">
          <div class="tabbar">
            <button class="newtab" aria-label="New diagram">${icon("newtab", 24)}</button>
            <div class="tabs">
              ${this.tabs.map((t, i) => html`
                <div class=${classMap({ tab: true, current: i === this.tab, before: i === this.tab - 1 })}>
                  ${icon(i ? "activity" : "classdiag", 24)}
                  <button @click=${() => (this.tab = i)}>${t}</button>
                  <button class="shut" aria-label="Close ${t}">${icon("tabclose", 12)}</button>
                </div>`)}
            </div>
          </div>
          <div class="sunken canvas"><activity-canvas></activity-canvas></div>
        </main>
      </div>

      <footer class="statusbar">
        <div class="cell message">Press Ctrl with left mouse click to delete a point</div>
        <div class="right">
          <div class="cell zoom">
            <span>100%</span>
            <div class="zoomset"><button>Fit</button><button>100%</button></div>
          </div>
          <button class="cell mag" aria-label="Zoom out">${icon("zoomOut", 24)}</button>
          <div class="cell slider"><input type="range" aria-label="Zoom" min="0" max="100" value="18" /></div>
          <button class="cell mag" aria-label="Zoom in">${icon("zoomIn", 24)}</button>
        </div>
      </footer>
      <task-bar></task-bar>
    `;
  }
}
